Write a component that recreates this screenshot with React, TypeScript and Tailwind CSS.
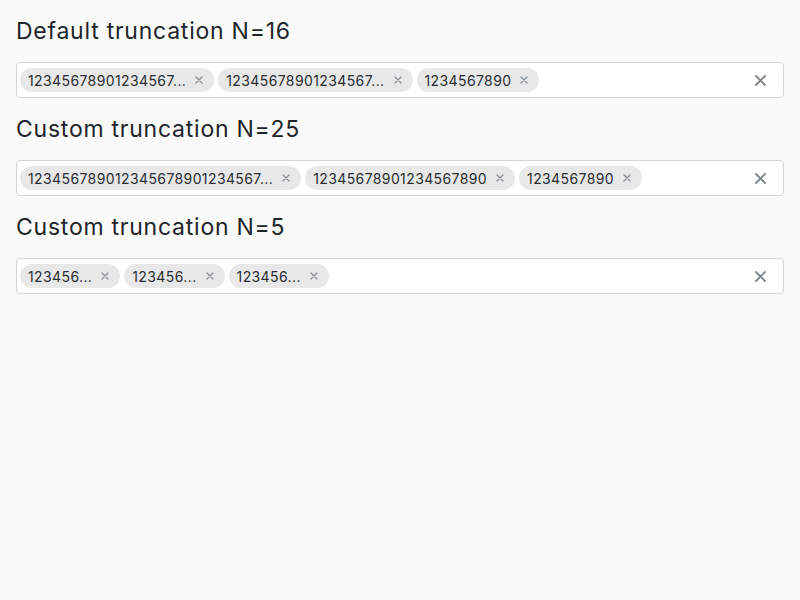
const sections = [
  {
    title: 'Default truncation N=16',
    pills: ['12345678901234567...', '12345678901234567...', '1234567890'],
  },
  {
    title: 'Custom truncation N=25',
    pills: ['123456789012345678901234567...', '12345678901234567890', '1234567890'],
  },
  {
    title: 'Custom truncation N=5',
    pills: ['123456...', '123456...', '123456...'],
  },
];

function SmallX() {
  return (
    <svg width="8" height="8" viewBox="0 0 8 8" fill="none" stroke="#868e96" strokeWidth="1.3" strokeLinecap="round">
      <path d="M1 1L7 7M7 1L1 7" />
    </svg>
  );
}

function ClearX() {
  return (
    <svg width="11" height="11" viewBox="0 0 11 11" fill="none" stroke="#7d838c" strokeWidth="1.8" strokeLinecap="round">
      <path d="M1 1L10 10M10 1L1 10" />
    </svg>
  );
}

function Pill({ label }: { label: string }) {
  return (
    <div className="flex h-6 items-center rounded-full bg-[#e8e8e9] pl-2 pr-[6px] text-[14px] tracking-[0.028em] text-[#2a2d31]">
      <span className="whitespace-nowrap">{label}</span>
      <span className="ml-1 flex h-[18px] w-[18px] items-center justify-center">
        <SmallX />
      </span>
    </div>
  );
}

export default function App() {
  return (
    <div className="min-h-[600px] bg-[#fafafa] p-4 font-['Inter',sans-serif]">
      <div className="flex flex-col gap-4">
        {sections.map((s) => (
          <div key={s.title} className="flex flex-col gap-4">
            <h3 className="h-[30px] text-[23px] font-normal leading-[30px] tracking-[0.033em] text-[#212529]">
              {s.title}
            </h3>
            <div className="flex h-9 items-center rounded-[4px] border border-[#d3d5da] bg-white pl-[3px] pr-[16px]">
              <div className="flex flex-1 items-center gap-1">
                {s.pills.map((p, i) => (
                  <Pill key={i} label={p} />
                ))}
              </div>
              <span className="flex w-[14px] items-center justify-center">
                <ClearX />
              </span>
            </div>
          </div>
        ))}
      </div>
    </div>
  );
}
